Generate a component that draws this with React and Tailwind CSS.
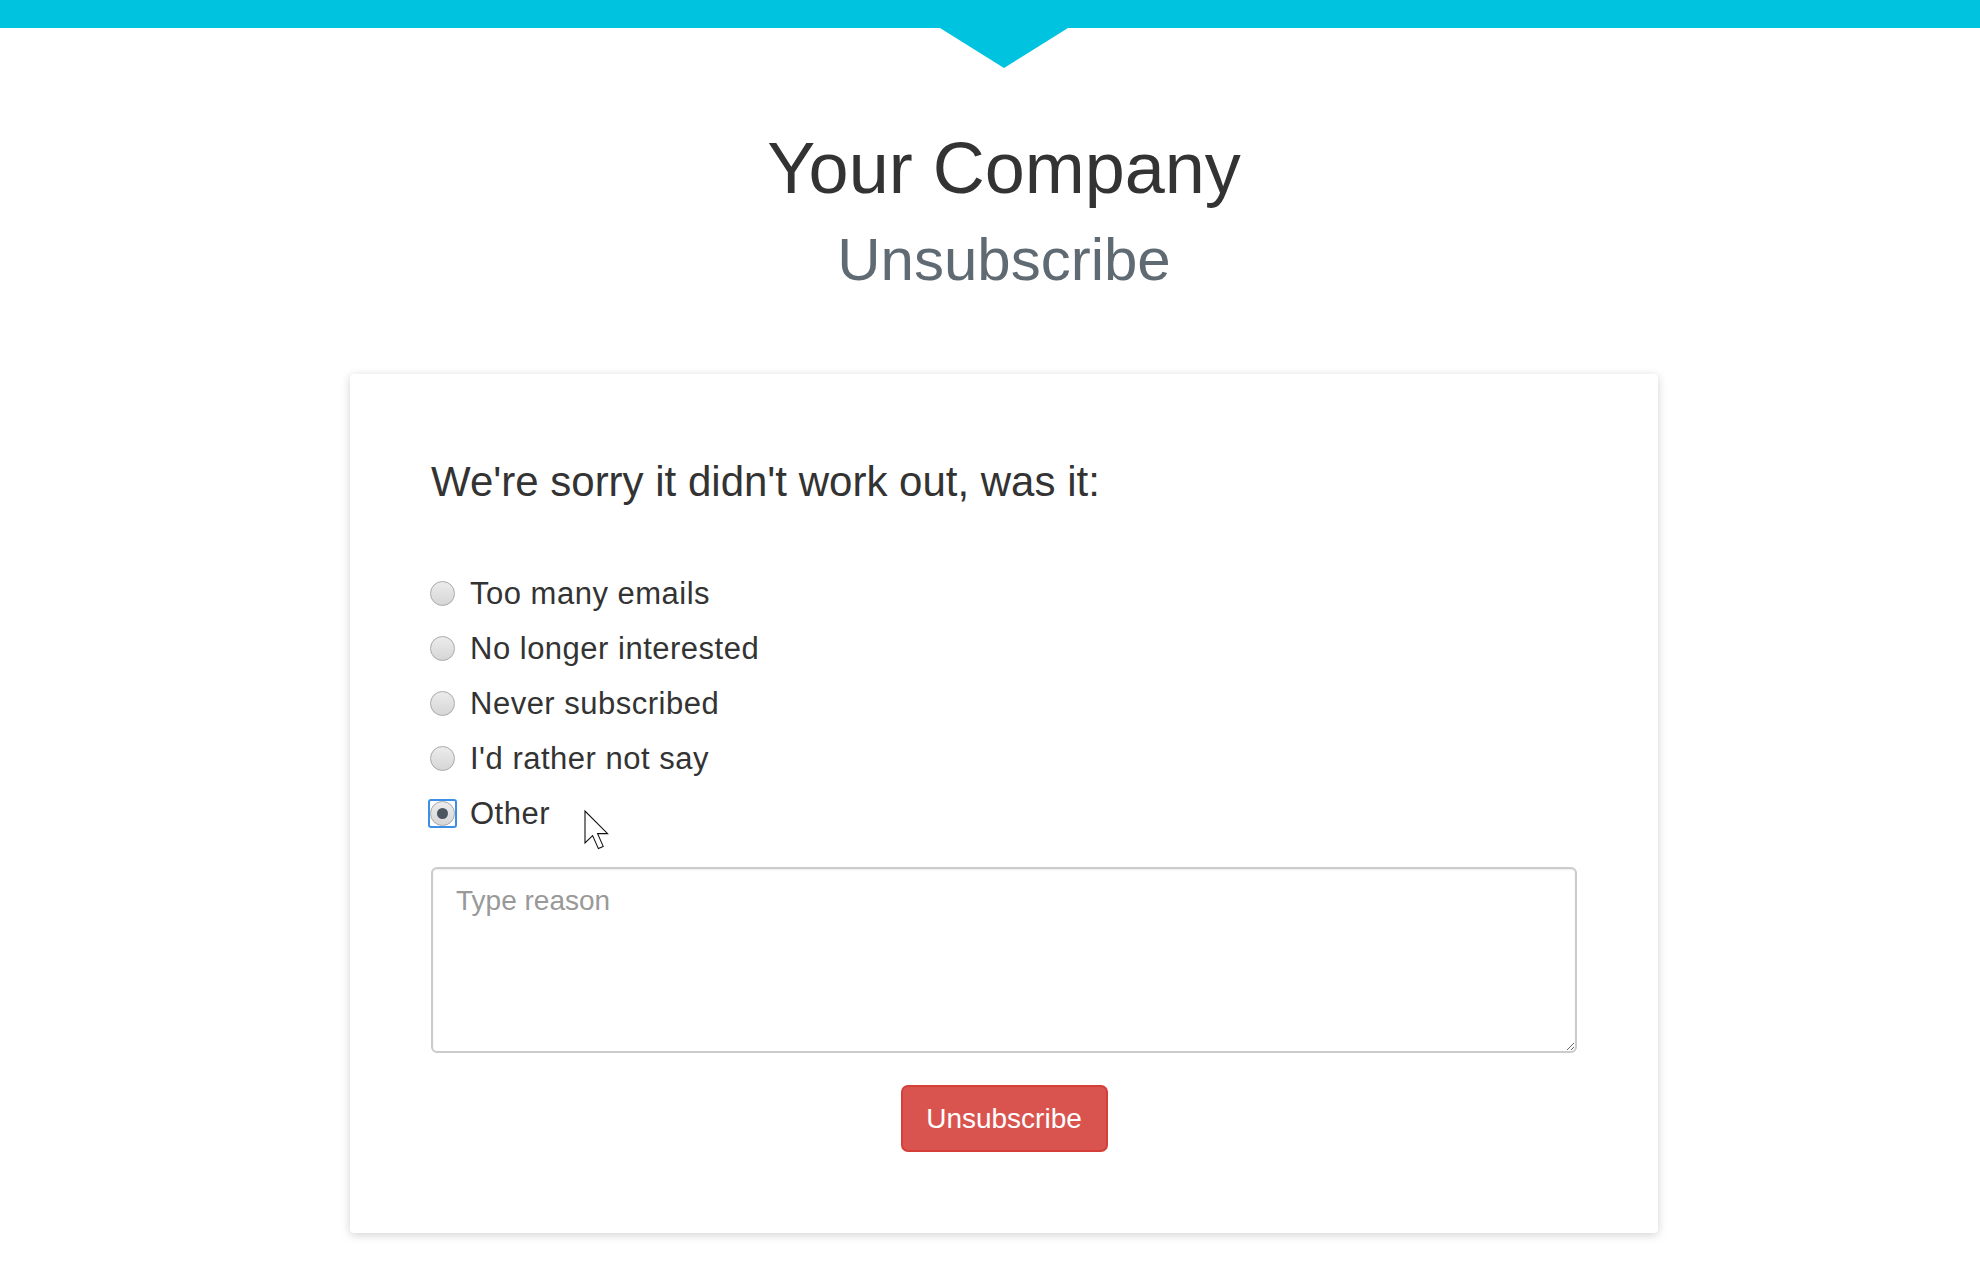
import React from 'react';

const reasons = [
    'Too many emails',
    'No longer interested',
    'Never subscribed',
    "I'd rather not say",
    'Other',
];

const Radio = ({ checked }) => (
    <span className="relative flex h-[25px] w-[25px] shrink-0 items-center justify-center">
        {checked && (
            <span className="absolute -inset-[2px] rounded-[3px] border-2 border-[#3d8fe6]" />
        )}
        <span className="flex h-[25px] w-[25px] items-center justify-center rounded-full border border-[#a9a9a9] bg-gradient-to-b from-[#ececec] to-[#d6d6d6]">
            {checked && <span className="h-[11px] w-[11px] rounded-full bg-[#4b5661]" />}
        </span>
    </span>
);

const Cursor = () => (
    <svg
        className="absolute left-[153px] top-[24px]"
        width="26"
        height="40"
        viewBox="0 0 13 20"
    >
        <path
            d="M0.5 0.5 L0.5 16.5 L4.3 12.8 L7.2 19.3 L9.6 18.2 L6.8 11.8 L11.8 11.8 Z"
            fill="#fff"
            stroke="#111"
            strokeWidth="1.1"
            strokeLinejoin="miter"
            vectorEffect="non-scaling-stroke"
        />
    </svg>
);

export default function App() {
    const selected = 'Other';

    return (
        <div className="min-h-screen bg-white font-['Liberation_Sans',Arial,sans-serif]">
            <div className="h-[28px] bg-[#00c3df]" />

            <div className="pl-[28px] pb-[40px]">
                {/* arrow under the top bar */}
                <div className="flex justify-center">
                    <div className="h-0 w-0 border-l-[64px] border-r-[64px] border-t-[40px] border-l-transparent border-r-transparent border-t-[#00c3df]" />
                </div>

                <h1 className="mt-[60px] text-center text-[72px] leading-[80px] text-[#333]">Your Company</h1>
                <h2 className="mt-[18px] text-center text-[60px] leading-[68px] text-[#5f6a72]">Unsubscribe</h2>

                <div className="mx-auto mt-[80px] w-[1308px] rounded-[4px] bg-white px-[81px] pt-[84px] pb-[81px] shadow-[0_2px_10px_rgba(0,0,0,0.18)]">
                    <h3 className="text-[42px] leading-[48px] text-[#333]">We're sorry it didn't work out, was it:</h3>

                    <div className="mt-[60px]">
                        {reasons.map((reason) => (
                            <label
                                key={reason}
                                className="relative flex h-[55px] items-center gap-[15px] text-[31px] leading-[55px] tracking-[0.5px] text-[#333]"
                            >
                                <span className="-ml-[1px]">
                                    <Radio checked={reason === selected} />
                                </span>
                                <span>{reason}</span>
                                {reason === 'Other' && <Cursor />}
                            </label>
                        ))}
                    </div>

                    <textarea
                        className="mt-[26px] block h-[186px] w-full rounded-[6px] border-2 border-[#cbcbcb] px-[23px] pt-[12px] text-[28px] leading-[40px] text-[#555] shadow-[inset_0_1px_2px_rgba(0,0,0,0.08)] outline-none placeholder:text-[#999]"
                        placeholder="Type reason"
                    />

                    <div className="mt-[32px] flex justify-center">
                        <button className="h-[67px] w-[207px] rounded-[7px] border-2 border-[#d43f3a] bg-[#d9534f] text-[28px] text-white">
                            Unsubscribe
                        </button>
                    </div>
                </div>
            </div>
        </div>
    );
}
